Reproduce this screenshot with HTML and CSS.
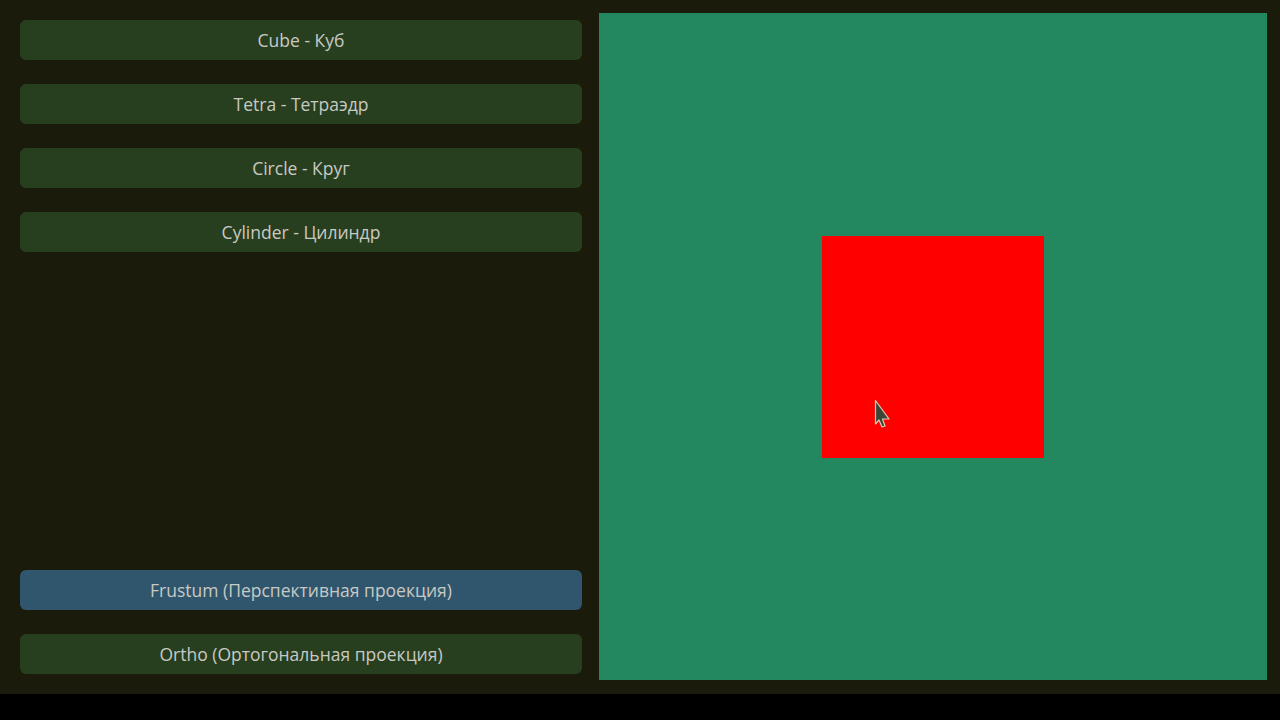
FILE: index.html
```html
<!DOCTYPE html>
<html lang="ru">
<head>
<meta charset="utf-8">
<title>Projection demo</title>
<link rel="stylesheet" href="styles.css">
</head>
<body>
<div class="app">
  <div class="panel">
    <div class="group">
      <button class="btn">Cube - Куб</button>
      <button class="btn">Tetra - Тетраэдр</button>
      <button class="btn">Circle - Круг</button>
      <button class="btn">Cylinder - Цилиндр</button>
    </div>
    <div class="group">
      <button class="btn btn-active">Frustum (Перспективная проекция)</button>
      <button class="btn">Ortho (Ортогональная проекция)</button>
    </div>
  </div>
  <div class="viewport">
    <div class="shape">
      <svg class="cursor" width="18" height="30" viewBox="0 0 18 30">
        <path d="M1.5 1.5 L1.5 25 L5 21 L8 28 L11 27 L8.5 20 L15 20 Z" fill="#3d4538" stroke="#d9cfae" stroke-width="1.2" stroke-linejoin="round"/>
      </svg>
    </div>
  </div>
</div>
<div class="bottom"></div>
</body>
</html>
```

FILE: styles.css
```css
html, body {
  margin: 0;
  padding: 0;
  background: #000;
}
.app {
  height: 694px;
  background: #1b1b0c;
  display: flex;
  align-items: flex-start;
}
.panel {
  width: 562px;
  height: 654px;
  margin: 20px 0 0 20px;
  display: flex;
  flex-direction: column;
  justify-content: space-between;
}
.group {
  display: flex;
  flex-direction: column;
  gap: 24px;
}
.btn {
  height: 40px;
  width: 100%;
  border: none;
  border-radius: 6px;
  background: #273f1f;
  color: #c9c9c4;
  font-family: "Open Sans", "Noto Sans", sans-serif;
  font-size: 17.5px;
  padding: 0;
  cursor: pointer;
}
.btn-active {
  background: #30566d;
}
.viewport {
  width: 668px;
  height: 667px;
  margin: 13px 0 0 17px;
  background: #23885f;
  display: flex;
  align-items: center;
  justify-content: center;
}
.shape {
  width: 222px;
  height: 222px;
  background: #ff0000;
  position: relative;
}
.cursor {
  position: absolute;
  left: 52px;
  top: 163px;
}
.bottom {
  height: 26px;
  background: #000;
}
```
